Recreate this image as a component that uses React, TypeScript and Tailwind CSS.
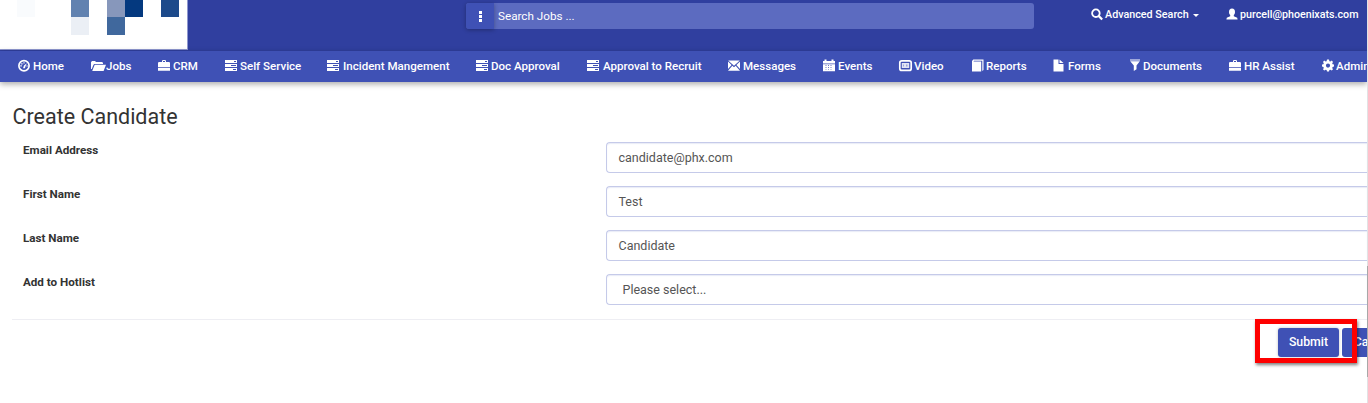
import React from "react";

type IconName =
  | "dashboard" | "folder" | "briefcase" | "tasks" | "envelope" | "calendar"
  | "video" | "book" | "file" | "filter" | "cog" | "search" | "user";

const shapes: Record<IconName, React.ReactNode> = {
  dashboard: (
    <>
      <circle cx="6" cy="5.8" r="5.1" fill="none" stroke="currentColor" strokeWidth="1.7" />
      <path d="M5 8.2 6 5.6 8.8 3.2 7.4 6.6 7 8.2Z" />
      <path d="M2.3 5.3h1.5v1.1H2.3zM3.2 3.2h1.4v1.2H3.2zM5.4 2.3h1.2v1.2H5.4zM8.4 5.4h1.3v1.1H8.4z" />
    </>
  ),
  folder: (
    <path d="M0 9V2.2L1 1h3l1 1h6.2l.8 1v1H3.2L2.4 5 .8 9ZM3.7 4.8H15L12.6 11H1.2Z" />
  ),
  briefcase: (
    <path fillRule="evenodd" d="M4 2V.8L4.8 0h2.4l.8.8V2h3.2l.8.8V7H0V2.8L.8 2ZM5 1v1h2V1ZM0 7.7h12v3.1H0Z" />
  ),
  tasks: (
    <path fillRule="evenodd" d="M0 0h12v3H0ZM9 1v1h2V1ZM0 4h12v3H0ZM6 5v1h5V5ZM0 8h12v3H0ZM8 9v1h3V9Z" />
  ),
  envelope: (
    <path d="M.2.5h11.6L6 5.8ZM0 1.5l3.6 3.6L0 9.1ZM12 1.5v7.6L8.4 5.1ZM4.3 5.7 6 7.3l1.7-1.6L12 10.8H0Z" />
  ),
  calendar: (
    <path fillRule="evenodd" d="M0 3.6V1h1.5V-.5h2V1h5V-.5h2V1H12v2.6ZM0 4.2h12v7H0ZM2.5 5.1v.7h1v-.7ZM5 5.1v.7h1v-.7ZM7.5 5.1v.7h1v-.7ZM2.5 7.2v.7h1v-.7ZM5 7.2v.7h1v-.7ZM7.5 7.2v.7h1v-.7ZM2.5 9.4v.7h1v-.7ZM5 9.4v.7h1v-.7ZM7.5 9.4v.7h1v-.7Z" />
  ),
  video: (
    <>
      <rect x=".8" y=".8" width="11.4" height="9.6" rx="2" fill="none" stroke="currentColor" strokeWidth="1.7" />
      <path d="M2.8 3h7.4v5H2.8Z" opacity=".85" />
      <path d="M4 4.6h1v2H4zM7 4.6h1.5v2H7z" fill="#3f51b5" opacity=".45" />
    </>
  ),
  book: (
    <path d="M0 1.1 1.3-.4h10.2v10.5l-1.2.8V.8H2l-.5.8h7.7v9.8H0Z" />
  ),
  file: <path d="M.5-.4h5v4.4h5v7.4H.5ZM6.5-.4l4 3.5h-4Z" />,
  filter: <path d="M1-.4h10v1H1ZM1.2 1.2h9.6L7.5 5.4v3.8L4.8 11V5.4Z" />,
  cog: (
    <path fillRule="evenodd" transform="translate(0 -.4)" d="m5 0h2l.4 1.6 1 .4L9.8 1 11 2.3l-.8 1.3.4 1L12 5v2l-1.4.4-.4 1 .8 1.3L9.8 11l-1.4-.9-1 .4L7 12H5l-.4-1.5-1-.4L2.2 11 1 9.7l.8-1.3-.4-1L0 7V5l1.4-.4.4-1L1 2.3 2.2 1l1.4 1 1-.4ZM6 3.9A2.1 2.1 0 1 0 6 8.1 2.1 2.1 0 1 0 6 3.9Z" />
  ),
  search: (
    <>
      <circle cx="4.9" cy="4.2" r="3.8" fill="none" stroke="currentColor" strokeWidth="1.8" />
      <path d="m7.6 6.9 3.6 3.6" stroke="currentColor" strokeWidth="2.2" />
    </>
  ),
  user: (
    <path d="M6-.4c2 0 3 1.4 3 3.3 0 1.5-.6 2.5-1.2 3.2v1.1L11.2 8.8l.4 1.8H.4l.4-1.8 3.4-1.6V6.1C3.6 5.4 3 4.4 3 2.9 3 1 4-.4 6-.4Z" />
  ),
};

function Icon({ name }: { name: IconName }) {
  return (
    <svg width="12" height="12" viewBox="0 0 12 12" fill="currentColor" className="shrink-0 overflow-visible">
      {shapes[name]}
    </svg>
  );
}

const navItems: { label: string; icon: IconName; size: string }[] = [
  { label: "Home", icon: "dashboard", size: "w-[73px] gap-[3px]" },
  { label: "Jobs", icon: "folder", size: "w-[67px] gap-[3px]" },
  { label: "CRM", icon: "briefcase", size: "w-[67px] gap-[3px]" },
  { label: "Self Service", icon: "tasks", size: "w-[102px] gap-[3px]" },
  { label: "Incident Mangement", icon: "tasks", size: "w-[149px] gap-[4px]" },
  { label: "Doc Approval", icon: "tasks", size: "w-[111px] gap-[3px]" },
  { label: "Approval to Recruit", icon: "tasks", size: "w-[141px] gap-[4px]" },
  { label: "Messages", icon: "envelope", size: "w-[95px] gap-[3px]" },
  { label: "Events", icon: "calendar", size: "w-[76px] gap-[3px]" },
  { label: "Video", icon: "video", size: "w-[73px] gap-[3px]" },
  { label: "Reports", icon: "book", size: "w-[81px] gap-[2px]" },
  { label: "Forms", icon: "file", size: "w-[76px] gap-[3px]" },
  { label: "Documents", icon: "filter", size: "w-[100px] gap-[2px]" },
  { label: "HR Assist", icon: "briefcase", size: "w-[93px] gap-[3px]" },
  { label: "Admin", icon: "cog", size: "w-[73px] gap-[2px]" },
];

function Logo() {
  return (
    <div className="h-[50px] w-[188px] shrink-0 border-r border-b border-[#8f97cf] bg-white pl-[17px]">
      <div className="grid grid-cols-[repeat(9,18px)] grid-rows-[17px_18px]">
        <span className="col-start-1 row-start-1 bg-[#f9fbfd]" />
        <span className="col-start-4 row-start-1 bg-[#6182b0]" />
        <span className="col-start-6 row-start-1 bg-[#8797bb]" />
        <span className="col-start-7 row-start-1 bg-[#04397f]" />
        <span className="col-start-9 row-start-1 bg-[#1c4a8a]" />
        <span className="col-start-4 row-start-2 bg-[#ebeff5]" />
        <span className="col-start-6 row-start-2 bg-[#40689d]" />
      </div>
    </div>
  );
}

function Header() {
  return (
    <header className="flex h-[51px] shrink-0 bg-[#303f9f] text-white">
      <Logo />
      <div className="ml-[278px] mt-[3px] flex h-[26px] w-[568px] shrink-0 rounded-[3px] bg-[#5c6bc0]">
        <button className="flex w-[28px] flex-col items-center justify-center gap-[1px] rounded-l-[3px] bg-[#3f51b5] shadow-[0_1px_4px_rgba(0,0,0,0.3)]">
          <span className="size-[3px] bg-white" />
          <span className="size-[3px] bg-white" />
          <span className="size-[3px] bg-white" />
        </button>
        <span className="pl-[4px] text-[11.7px] leading-[26px]">Search Jobs ...</span>
      </div>
      <div className="ml-[57px] mt-[5px] flex h-[19px] shrink-0 items-center gap-[2px] text-[10.75px] font-medium">
        <Icon name="search" />
        <span className="w-[84px] pt-px whitespace-nowrap">Advanced Search</span>
        <span className="ml-[2px] mt-[2px] border-x-[3.5px] border-t-[3px] border-x-transparent border-t-white" />
      </div>
      <div className="ml-[27px] mt-[5px] flex h-[19px] items-center gap-[2px] text-[10.7px] font-medium">
        <Icon name="user" />
        <span className="pt-px">purcell@phoenixats.com</span>
      </div>
    </header>
  );
}

function Field({ label, value, select }: { label: string; value: string; select?: boolean }) {
  return (
    <div className="flex h-[44px]">
      <div className="w-[606px] shrink-0 pl-[23px] text-[11.65px] leading-[16px] font-bold">{label}</div>
      <div
        className={`h-[31px] flex-1 rounded-l-[4px] border border-r-0 border-[#c5cae9] text-[12.5px] leading-[30px] text-[#555] shadow-[inset_0_1px_1px_rgba(63,81,181,0.12)] ${
          select ? "pl-[15.5px]" : "pl-[11.5px]"
        }`}
      >
        {value}
      </div>
    </div>
  );
}

export default function App() {
  return (
    <div className="flex h-[403px] w-[1368px] overflow-hidden bg-white font-[Roboto,sans-serif] text-[#333]">
      <div className="flex w-[1367px] shrink-0 flex-col overflow-hidden">
        <Header />
        <nav className="flex h-[31px] shrink-0 bg-[#3f51b5] pl-[18px] text-[11.55px] font-medium text-white shadow-[0_2px_6px_rgba(0,0,0,0.35)]">
          {navItems.map((item) => (
            <a key={item.label} className={`flex h-[30px] shrink-0 items-center whitespace-nowrap ${item.size}`}>
              <Icon name={item.icon} />
              <span className="pt-[2px]">{item.label}</span>
            </a>
          ))}
        </nav>
        <main className="flex flex-col pt-[22px]">
          <h1 className="h-[38px] pl-[12.5px] text-[21.5px] leading-[26px]">Create Candidate</h1>
          <Field label="Email Address" value="candidate@phx.com" />
          <Field label="First Name" value="Test" />
          <Field label="Last Name" value="Candidate" />
          <Field label="Add to Hotlist" value="Please select..." select />
          <div className="mt-px ml-[12px] h-px bg-[#eeeef3]" />
          <div className="relative flex h-[60px] gap-[3px] pt-[8px] pl-[1278px]">
            <button className="h-[29px] w-[61px] shrink-0 rounded-[3px] bg-[#3f51b5] pb-px text-[12.3px] font-medium text-white shadow-[0_0_3px_rgba(0,0,0,0.25)]">
              Submit
            </button>
            <button className="h-[29px] w-[61px] shrink-0 rounded-[3px] bg-[#3f51b5] pb-px text-[12.3px] font-medium text-white">
              Cancel
            </button>
            <div className="absolute -top-px left-[1255px] h-[44px] w-[102px] border-[5px] border-[#fe0000] shadow-[1px_2px_3px_rgba(0,0,0,0.5)]" />
          </div>
        </main>
      </div>
      <div className="flex w-px flex-col bg-[#e2e2e4] pt-[266px]">
        <div className="h-[111px] bg-[#a8a8a8]" />
      </div>
    </div>
  );
}
